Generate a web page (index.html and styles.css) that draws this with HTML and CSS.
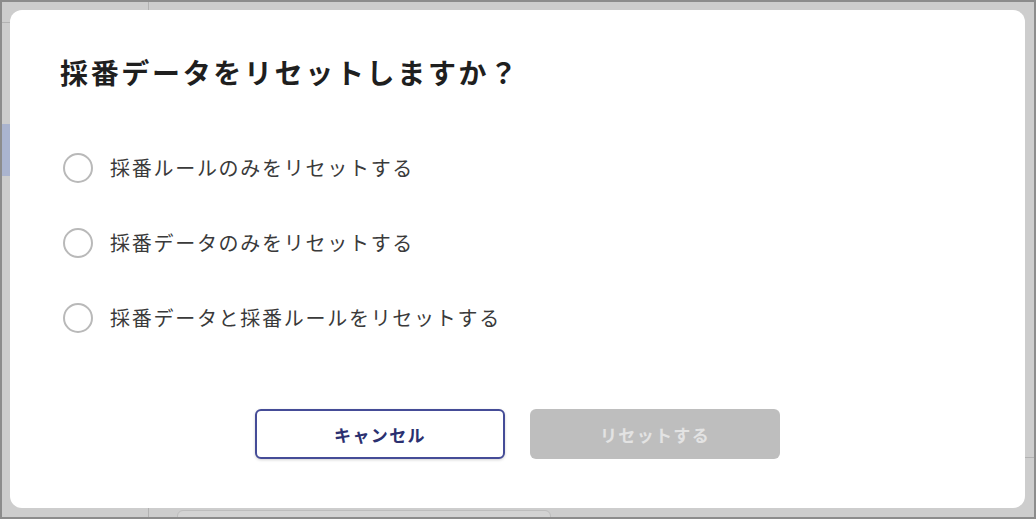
FILE: index.html
```html
<!DOCTYPE html>
<html lang="ja">
<head>
<meta charset="utf-8">
<title>採番データをリセットしますか？</title>
<link rel="stylesheet" href="styles.css">
</head>
<body>
<div class="screen">
  <div class="bg-line bg-vline-top"></div>
  <div class="bg-line bg-vline-bottom"></div>
  <div class="bg-line bg-hline-left"></div>
  <div class="bg-line bg-hline-right"></div>
  <div class="bg-selected"></div>
  <div class="bg-card"></div>

  <div class="dialog" role="dialog" aria-labelledby="dlg-title">
    <h1 class="dialog-title" id="dlg-title">採番データをリセットしますか？</h1>
    <div class="options">
      <label class="option">
        <span class="radio"></span>
        <span class="option-label">採番ルールのみをリセットする</span>
      </label>
      <label class="option">
        <span class="radio"></span>
        <span class="option-label">採番データのみをリセットする</span>
      </label>
      <label class="option">
        <span class="radio"></span>
        <span class="option-label">採番データと採番ルールをリセットする</span>
      </label>
    </div>
    <div class="actions">
      <button class="btn btn-cancel" type="button">キャンセル</button>
      <button class="btn btn-reset" type="button" disabled>リセットする</button>
    </div>
  </div>
</div>
</body>
</html>
```

FILE: styles.css
```css
html, body {
  margin: 0;
  padding: 0;
  background: #cdcdcd;
}

.screen {
  position: relative;
  box-sizing: border-box;
  width: 1036px;
  height: 519px;
  border: 2px solid #8c8c8c;
  background: #cdcdcd;
  padding: 8px 0 0 8px;
  font-family: "Noto Sans CJK JP", "Noto Sans", sans-serif;
  overflow: hidden;
}

/* faint page content behind the overlay */
.bg-line {
  position: absolute;
  background: #b2b2b2;
}
.bg-vline-top { left: 146px; top: 0; width: 1px; height: 8px; }
.bg-vline-bottom { left: 146px; bottom: 0; width: 1px; height: 9px; }
.bg-hline-left { left: 0; top: 20px; width: 8px; height: 1px; }
.bg-hline-right { right: 0; top: 455px; width: 9px; height: 1px; }
.bg-selected {
  position: absolute;
  left: 0;
  top: 122px;
  width: 8px;
  height: 52px;
  background: #aab4cf;
}
.bg-card {
  position: absolute;
  left: 175px;
  top: 508px;
  width: 372px;
  height: 20px;
  border: 1px solid #bdbdbd;
  border-radius: 6px;
  background: #d3d3d3;
}

.dialog {
  position: relative;
  box-sizing: border-box;
  width: 1015px;
  height: 498px;
  background: #ffffff;
  border-radius: 12px;
  padding: 42px 50px 49px 50px;
  display: flex;
  flex-direction: column;
}

.dialog-title {
  margin: 0;
  font-size: 28px;
  line-height: 40px;
  font-weight: 700;
  letter-spacing: 0.095em;
  color: #1f1f1f;
}

.options {
  margin-top: 61px;
  display: flex;
  flex-direction: column;
  gap: 45px;
}

.option {
  display: flex;
  align-items: center;
  height: 30px;
  gap: 17px;
  padding-left: 3px;
}

.radio {
  box-sizing: border-box;
  flex: none;
  width: 30px;
  height: 30px;
  border: 2px solid #b9b9b9;
  border-radius: 50%;
  background: #ffffff;
}

.option-label {
  font-size: 20px;
  line-height: 30px;
  letter-spacing: 0.086em;
  color: #3a3a3a;
}

.actions {
  margin-top: auto;
  display: flex;
  justify-content: center;
  gap: 25px;
}

.btn {
  box-sizing: border-box;
  width: 250px;
  height: 50px;
  border-radius: 6px;
  font-family: "Noto Sans CJK JP", "Noto Sans", sans-serif;
  font-size: 17px;
  font-weight: 700;
  letter-spacing: 0.08em;
  cursor: pointer;
}

.btn-cancel {
  background: #ffffff;
  border: 2px solid #454c97;
  color: #2b3070;
  box-shadow: 0 1px 3px rgba(0, 0, 0, 0.18);
}

.btn-reset {
  background: #bebebe;
  border: none;
  color: #e3e3e3;
  cursor: default;
}
```
